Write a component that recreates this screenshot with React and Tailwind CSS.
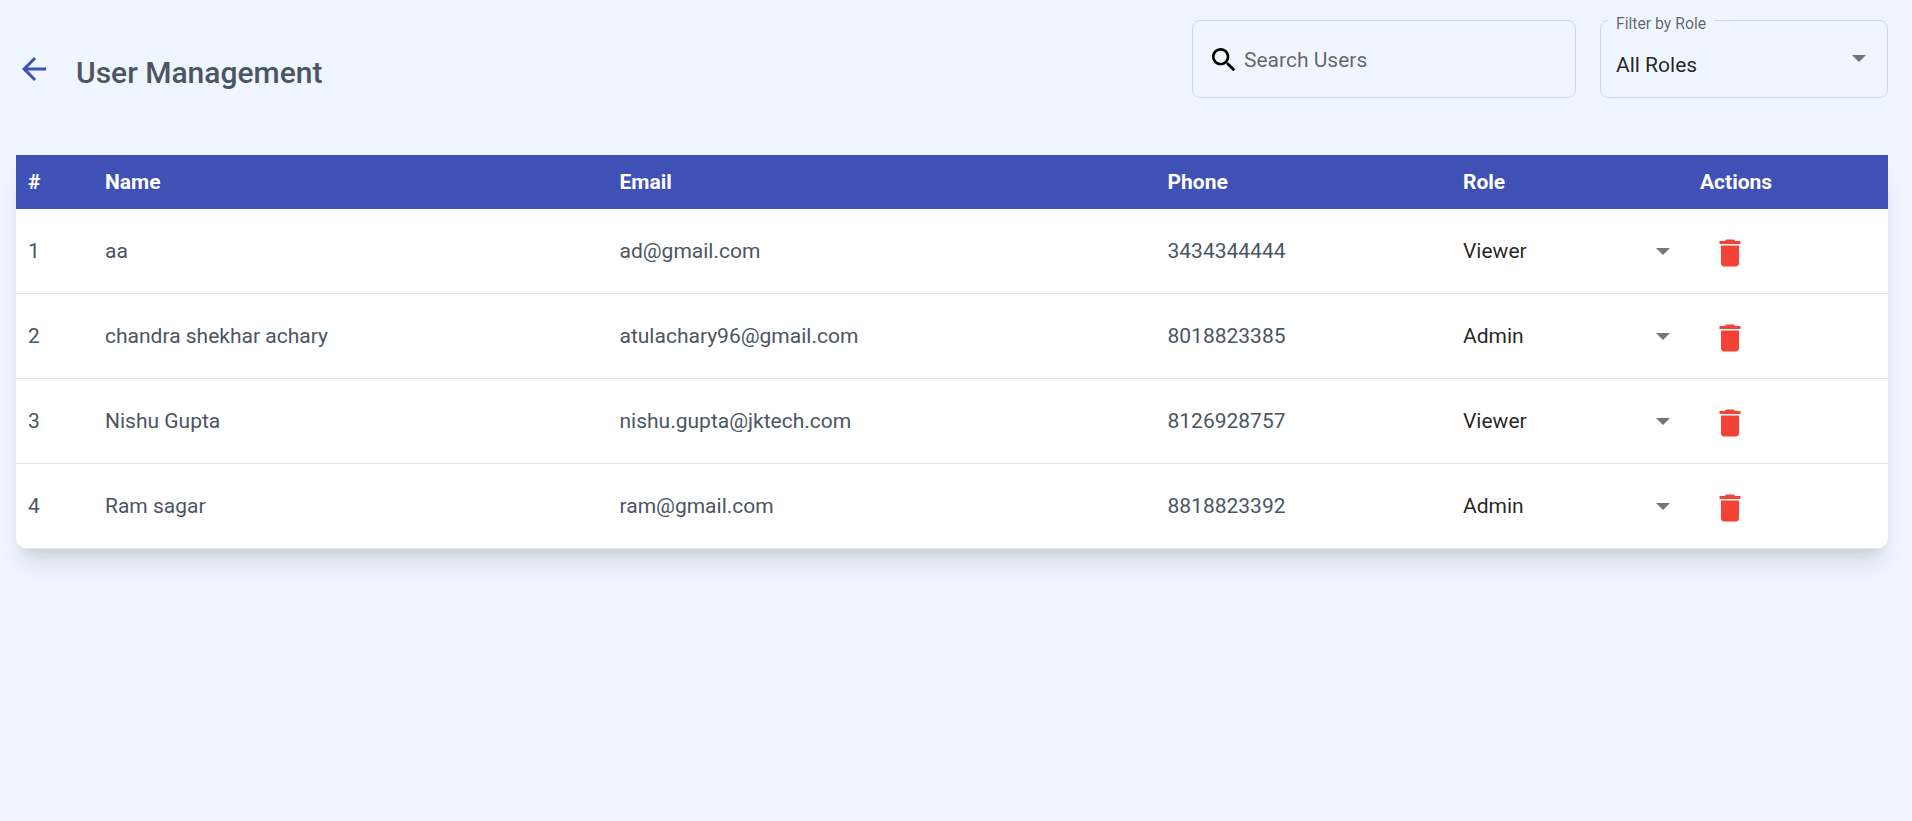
const users = [
  { id: 1, name: "aa", email: "ad@gmail.com", phone: "3434344444", role: "Viewer" },
  { id: 2, name: "chandra shekhar achary", email: "atulachary96@gmail.com", phone: "8018823385", role: "Admin" },
  { id: 3, name: "Nishu Gupta", email: "nishu.gupta@jktech.com", phone: "8126928757", role: "Viewer" },
  { id: 4, name: "Ram sagar", email: "ram@gmail.com", phone: "8818823392", role: "Admin" },
];

const columns = "grid grid-cols-[89px_514.500px_548px_295.500px_237px_1fr] items-center";

function Caret({ className }) {
  return (
    <svg viewBox="0 0 14 7" className={`h-[7px] w-[14px] shrink-0 ${className}`} fill="currentColor">
      <path d="M0 0h14L7 7z" />
    </svg>
  );
}

function UserRow({ user }) {
  return (
    <div className={`${columns} h-[85px] border-b border-[#e5e7eb] text-[21px] text-[#4b5563]`}>
      <span className="pl-3 pt-0.5">{user.id}</span>
      <span className="pt-0.5">{user.name}</span>
      <span className="pt-0.5">{user.email}</span>
      <span className="pt-0.5">{user.phone}</span>
      <div className="flex items-center justify-between pr-[30px] text-black/87">
        <span className="pt-0.5">{user.role}</span>
        <Caret className="text-[#757575]" />
      </div>
      <button className="ml-3 flex w-9 pt-1 text-[#f44336]" aria-label="Delete">
        <svg viewBox="0 0 24 24" className="size-9" fill="currentColor">
          <path d="M6 19c0 1.1.9 2 2 2h8c1.1 0 2-.9 2-2V7H6v12zM19 4h-3.500l-1-1h-5l-1 1H5v2h14V4z" />
        </svg>
      </button>
    </div>
  );
}

export default function App() {
  return (
    <div className="flex min-h-screen flex-col bg-[#eff6ff] pl-4 pr-6 font-[Roboto,sans-serif]">
      <header className="flex h-[155px] justify-between pt-5">
        <div className="flex h-[98px] items-center">
          <button className="flex text-[#3f51b5]" aria-label="Back">
            <svg viewBox="0 0 24 24" className="size-9" fill="currentColor">
              <path d="M20 11H7.83l5.590-5.590L12 4l-8 8 8 8 1.410-1.410L7.830 13H20v-2z" />
            </svg>
          </button>
          <h1 className="ml-6 mt-[7px] text-[30px] font-medium text-[#4b5563]">User Management</h1>
        </div>
        <div className="flex gap-6">
          <div className="flex h-[78px] w-[384px] items-center rounded-[8px] border border-[#cfd8e3] pl-[15px] pt-[2px]">
            <svg viewBox="0 0 24 24" className="size-8 text-black" fill="currentColor">
              <path d="M15.500 14h-.79l-.28-.27C15.410 12.590 16 11.110 16 9.500 16 5.910 13.090 3 9.500 3S3 5.910 3 9.500 5.910 16 9.500 16c1.610 0 3.090-.59 4.230-1.570l.27.28v.79l5 4.990L20.490 19l-4.990-5zm-6 0C7.010 14 5 11.990 5 9.500S7.010 5 9.500 5 14 7.010 14 9.500 11.990 14 9.500 14z" />
            </svg>
            <span className="ml-1 pt-0.5 text-[21px] text-black/60">Search Users</span>
          </div>
          <div className="relative flex h-[78px] w-[288px] items-center justify-between rounded-[8px] border border-[#cfd8e3] pl-[15px] pr-[21px]">
            <span className="absolute -top-[7px] left-[7px] bg-[#eff6ff] px-2 text-[15.75px] leading-5 text-black/60">
              Filter by Role
            </span>
            <span className="pt-3.5 text-[21px] text-black/87">All Roles</span>
            <Caret className="-mt-px text-[#707378]" />
          </div>
        </div>
      </header>
      <main className="rounded-b-xl bg-white shadow-xl">
        <div className={`${columns} h-[54px] bg-[#3f51b5] pt-0.5 text-[21px] font-bold text-white`}>
          <span className="pl-3">#</span>
          <span>Name</span>
          <span>Email</span>
          <span>Phone</span>
          <span>Role</span>
          <span>Actions</span>
        </div>
        {users.map((user) => (
          <UserRow key={user.id} user={user} />
        ))}
      </main>
    </div>
  );
}
